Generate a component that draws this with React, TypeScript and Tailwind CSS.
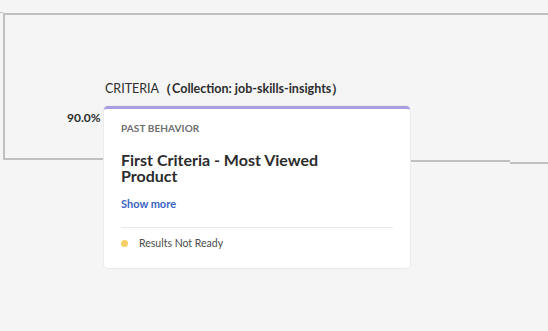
import React from 'react';

export default function App() {
  return (
    <div className="w-[548px] h-[331px] bg-[#f5f5f5] overflow-hidden relative font-['Lato','Noto_Sans',sans-serif]">
      {/* connector lines */}
      <div className="absolute left-0 top-[12px] w-[3px] h-[1px] bg-[#c4c4c4]" />
      <div className="absolute left-[3px] top-[13px] right-0 h-[2px] bg-[#c0c0c0]" />
      <div className="absolute left-[3px] top-[13px] w-[2px] h-[147px] bg-[#c0c0c0]" />
      <div className="absolute left-[3px] top-[158px] w-[102px] h-[2px] bg-[#c0c0c0]" />
      <div className="absolute left-[409px] top-[160px] w-[101px] h-[2px] bg-[#c0c0c0]" />
      <div className="absolute left-[510px] top-[162px] right-0 h-[2px] bg-[#c0c0c0]" />

      {/* criteria node */}
      <div className="absolute left-[67px] top-[81px] flex flex-col gap-[9px]">
        <div className="pl-[38px] text-[12.5px] text-[#2c2c2c] leading-4 whitespace-nowrap">
          CRITERIA<span className="font-bold">（Collection: job-skills-insights）</span>
        </div>
        <div className="flex items-start">
          <div className="w-[37px] mt-[4px] text-[12px] font-bold text-[#2c2c2c] leading-4">90.0%</div>
          <div className="w-[306px] h-[162px] bg-white rounded-[4px] border-t-[3px] border-[#a99de0] shadow-[0_0_0_1px_#ebebeb] px-[17px]">
            <div className="mt-[13px] text-[10px] font-bold uppercase text-[#6e6e6e] leading-3 tracking-[0.1px]">Past Behavior</div>
            <div className="mt-[18px] w-[230px] text-[16px] font-bold text-[#2c2c2c] leading-[16px]">
              First Criteria - Most Viewed Product
            </div>
            <div className="mt-[12px] text-[11px] font-bold text-[#3b63c4] leading-4">Show more</div>
            <div className="mt-[15px] h-px bg-[#e8e8e8]" />
            <div className="mt-[7px] flex items-center gap-[11px]">
              <span className="w-[7px] h-[7px] rounded-full bg-[#f6cf66]" />
              <span className="text-[10.5px] text-[#4b4b4b] leading-4">Results Not Ready</span>
            </div>
          </div>
        </div>
      </div>
    </div>
  );
}
